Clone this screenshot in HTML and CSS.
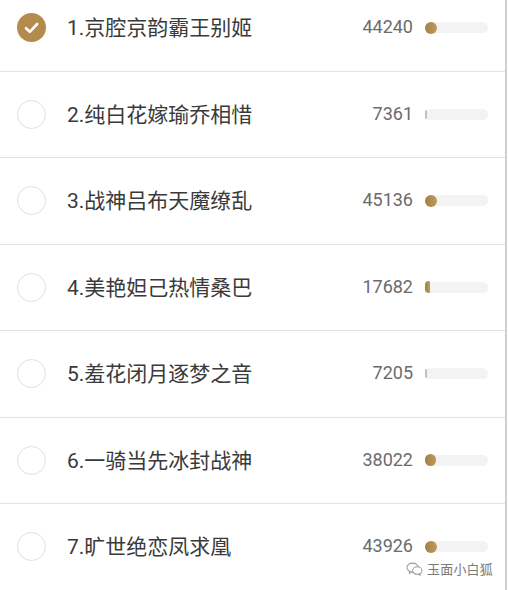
FILE: index.html
```html
<!DOCTYPE html>
<html lang="zh">
<head>
<meta charset="utf-8">
<link rel="stylesheet" href="styles.css">
</head>
<body>
<div class="page">
  <ul class="list">
    <li class="row">
      <span class="radio checked"><svg viewBox="0 0 29 29" width="29" height="29"><path d="M9 15.2 L12.8 18.8 L20.2 11" fill="none" stroke="#fff" stroke-width="2.6" stroke-linecap="round" stroke-linejoin="round"/></svg></span>
      <span class="name">1.京腔京韵霸王别姬</span>
      <span class="count">44240</span>
      <span class="bar"><span class="fill" style="width:12px"></span></span>
    </li>
    <li class="row">
      <span class="radio"></span>
      <span class="name">2.纯白花嫁瑜乔相惜</span>
      <span class="count">7361</span>
      <span class="bar"><span class="fill thin" style="width:2px"></span></span>
    </li>
    <li class="row">
      <span class="radio"></span>
      <span class="name">3.战神吕布天魔缭乱</span>
      <span class="count">45136</span>
      <span class="bar"><span class="fill" style="width:12px"></span></span>
    </li>
    <li class="row">
      <span class="radio"></span>
      <span class="name">4.美艳妲己热情桑巴</span>
      <span class="count">17682</span>
      <span class="bar"><span class="fill half" style="width:5px"></span></span>
    </li>
    <li class="row">
      <span class="radio"></span>
      <span class="name">5.羞花闭月逐梦之音</span>
      <span class="count">7205</span>
      <span class="bar"><span class="fill thin" style="width:2px"></span></span>
    </li>
    <li class="row">
      <span class="radio"></span>
      <span class="name">6.一骑当先冰封战神</span>
      <span class="count">38022</span>
      <span class="bar"><span class="fill" style="width:11px"></span></span>
    </li>
    <li class="row">
      <span class="radio"></span>
      <span class="name">7.旷世绝恋凤求凰</span>
      <span class="count">43926</span>
      <span class="bar"><span class="fill" style="width:12px"></span></span>
    </li>
  </ul>
  <div class="watermark">
    <svg class="wx" viewBox="0 0 18 15" width="17" height="14"><ellipse cx="7" cy="6" rx="6" ry="4.8" fill="none" stroke="#9a9a9a" stroke-width="1.1"/><path d="M4 10 L3.2 12.6 L6.2 10.8" fill="none" stroke="#9a9a9a" stroke-width="1"/><ellipse cx="12" cy="9.2" rx="5" ry="4" fill="#fff" stroke="#9a9a9a" stroke-width="1.1"/><path d="M14.5 12.6 L15.4 14.4 L12.6 13.1" fill="none" stroke="#9a9a9a" stroke-width="1"/></svg>
    <span class="wm-text">玉面小白狐</span>
  </div>
</div>
</body>
</html>
```

FILE: styles.css
```css
html, body {
  margin: 0;
  padding: 0;
  background: #ffffff;
  overflow: hidden;
}

.page {
  position: relative;
  width: 505px;
  height: 590px;
  border-right: 2px solid #cfcfcf;
  overflow: hidden;
  font-family: Roboto, "Noto Sans CJK SC", sans-serif;
}

.list {
  list-style: none;
  margin: -15px 0 0 0;
  padding: 0;
}

.row {
  display: flex;
  align-items: center;
  height: 86.5px;
  box-sizing: border-box;
  border-bottom: 1.5px solid #e2e2e2;
  padding: 0 17px 0 17px;
}

.radio {
  width: 29px;
  height: 29px;
  box-sizing: border-box;
  border-radius: 50%;
  border: 1.5px solid #e0e0e0;
  flex: none;
  display: flex;
}

.radio.checked {
  border: none;
  background: #b48b4d;
}

.name {
  flex: 1;
  margin-left: 21px;
  padding-bottom: 3px;
  font-size: 21px;
  color: #3a3a3a;
}

.count {
  font-size: 18px;
  color: #6b6b6b;
  margin-right: 12px;
  padding-bottom: 2px;
}

.bar {
  width: 63px;
  height: 11px;
  border-radius: 6px;
  background: #f3f3f3;
  display: flex;
  align-items: center;
  flex: none;
}

.fill {
  height: 12px;
  border-radius: 6px;
  background: linear-gradient(90deg, #a47f44, #c09a5c);
}

.fill.half {
  border-radius: 6px 2px 2px 6px;
}

.fill.thin {
  height: 9px;
  background: #c9c1b3;
}

.watermark {
  position: absolute;
  left: 406px;
  top: 559px;
  display: flex;
  align-items: center;
  gap: 4px;
}

.wm-text {
  font-family: "Noto Sans CJK SC", sans-serif;
  font-size: 13px;
  color: #7a7a7a;
  letter-spacing: 0.2px;
  text-shadow: 0 0 2px #fff, 0 0 2px #fff;
}
```
